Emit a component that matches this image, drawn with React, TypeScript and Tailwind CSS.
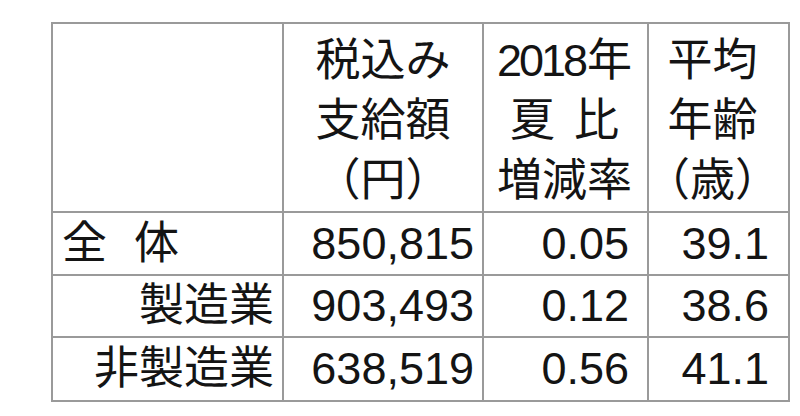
import React from "react";

const font = { fontFamily: '"Liberation Sans", "Noto Sans CJK JP", sans-serif' };

export default function App() {
  const cell = "bg-white flex items-center";
  return (
    <div className="w-[800px] h-[416px] bg-white overflow-hidden" style={font}>
      <div className="ml-[51px] mt-[22px] w-[739px] bg-[#9a9a9a] p-[2px] grid grid-cols-[229px_198px_163px_139px] grid-rows-[187px_61px_60px_62px] gap-[2px] text-[45px] text-[#141414]">
        {/* header */}
        <div className={cell}></div>
        <div className={`${cell} justify-center flex-col leading-[60px] pt-[6px]`}>
          <span>税込み</span>
          <span>支給額</span>
          <span>（円）</span>
        </div>
        <div className={`${cell} justify-center flex-col leading-[60px] pt-[6px] pr-[2px]`}>
          <span>
            <span className="tracking-[-3px]">2018</span>
            <span className="ml-[2px]">年</span>
          </span>
          <span className="flex gap-[19px]">
            <span>夏</span>
            <span>比</span>
          </span>
          <span>増減率</span>
        </div>
        <div className={`${cell} justify-center flex-col leading-[60px] pt-[6px] pr-[12px]`}>
          <span>平均</span>
          <span>年齢</span>
          <span>（歳）</span>
        </div>

        {/* row 1 */}
        <div className={`${cell} pl-[9px]`}>
          <span>全</span>
          <span className="ml-[27px]">体</span>
        </div>
        <div className={`${cell} justify-end pr-[8px]`}>850,815</div>
        <div className={`${cell} justify-end pr-[18px]`}>0.05</div>
        <div className={`${cell} justify-end pr-[19px]`}>39.1</div>

        {/* row 2 */}
        <div className={`${cell} justify-end pr-[8px]`}>製造業</div>
        <div className={`${cell} justify-end pr-[8px]`}>903,493</div>
        <div className={`${cell} justify-end pr-[18px]`}>0.12</div>
        <div className={`${cell} justify-end pr-[19px]`}>38.6</div>

        {/* row 3 */}
        <div className={`${cell} justify-end pr-[8px]`}>非製造業</div>
        <div className={`${cell} justify-end pr-[8px]`}>638,519</div>
        <div className={`${cell} justify-end pr-[18px]`}>0.56</div>
        <div className={`${cell} justify-end pr-[19px]`}>41.1</div>
      </div>
    </div>
  );
}
